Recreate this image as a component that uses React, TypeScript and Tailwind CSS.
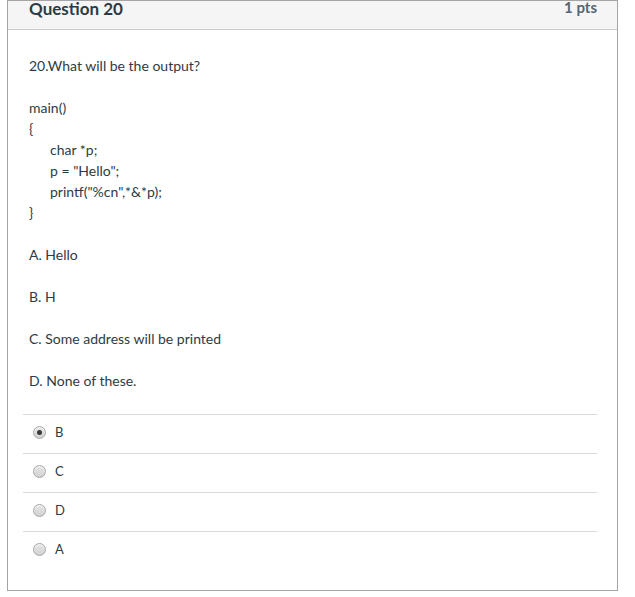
import React from "react";

function Radio({ checked }: { checked?: boolean }) {
  return (
    <span className="flex h-[13px] w-[13px] items-center justify-center rounded-full border border-[#a6a6a6] bg-gradient-to-b from-[#e6e6e6] to-[#d2d2d2] shadow-[inset_0_1px_1px_rgba(255,255,255,0.8)]">
      {checked && <span className="h-[5px] w-[5px] rounded-full bg-[#3b3b3b]" />}
    </span>
  );
}

export default function App() {
  const answers = [
    { label: "B", checked: true },
    { label: "C" },
    { label: "D" },
    { label: "A" },
  ];
  return (
    <div className="h-[597px] w-[635px] bg-white" style={{ fontFamily: "Lato, 'Open Sans', sans-serif" }}>
      <div className="ml-[7px] w-[611px] border border-[#a5a5a5] text-[#2d3b45]">
        <div className="flex h-[29px] items-start justify-between border-b border-[#c7cdd1] bg-[#f5f5f5] pl-[21px] pr-[20px]">
          <span className="text-[17px] font-bold leading-[16px] text-[#2d3b45]">Question 20</span>
          <span className="text-[15px] font-bold leading-[12px] text-[#556572]">1 pts</span>
        </div>
        <div className="pl-[21px] pr-[20px] pt-[25px] pb-[20px] text-[14px] leading-[21px]">
          <p>20.What will be the output?</p>
          <div className="mt-[21px]">
            <p>main()</p>
            <p>{"{"}</p>
            <p className="pl-[21px]">char *p;</p>
            <p className="pl-[21px]">p = "Hello";</p>
            <p className="pl-[21px]">printf("%cn",*&amp;*p);</p>
            <p>{"}"}</p>
          </div>
          <p className="mt-[21px]">A. Hello</p>
          <p className="mt-[21px]">B. H</p>
          <p className="mt-[21px]">C. Some address will be printed</p>
          <p className="mt-[21px]">D. None of these.</p>
          <div className="mt-[23px] ml-[-6px] w-[574px]">
            {answers.map((a) => (
              <div key={a.label} className="flex h-[39px] items-center border-t border-[#dadada] pb-[4px] pl-[10px]">
                <Radio checked={a.checked} />
                <span className="ml-[9px] text-[13px] text-[#2d3b45]">{a.label}</span>
              </div>
            ))}
          </div>
        </div>
      </div>
    </div>
  );
}
